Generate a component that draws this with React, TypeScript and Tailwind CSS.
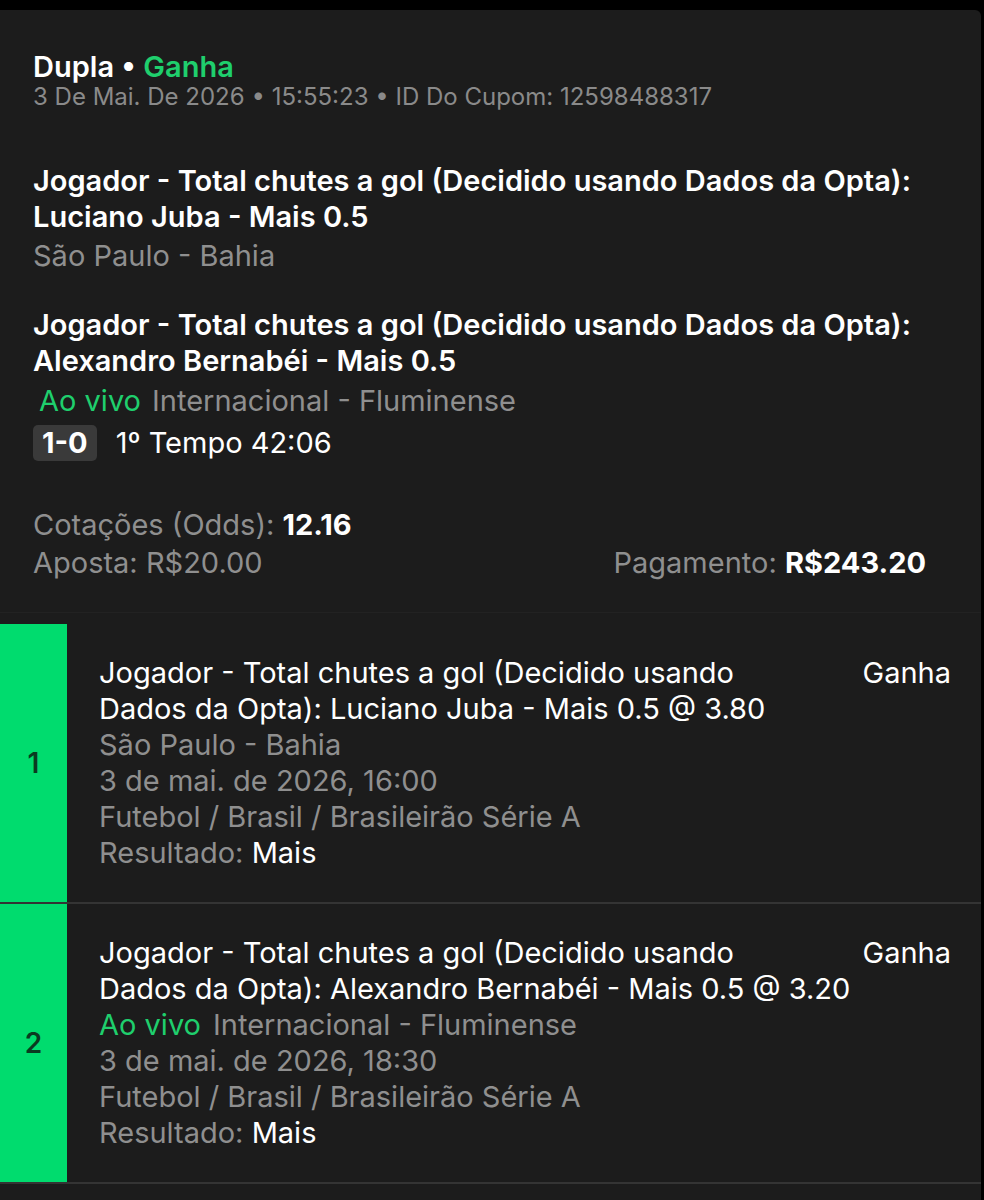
const font = { fontFamily: "Inter, 'Noto Sans', sans-serif" };

type Leg = {
  n: number;
  line1: string;
  line2: string;
  live: boolean;
  teams: string;
  date: string;
  path: string;
};

const legs: Leg[] = [
  {
    n: 1,
    line1: "Jogador - Total chutes a gol (Decidido usando",
    line2: "Dados da Opta): Luciano Juba - Mais 0.5 @ 3.80",
    live: false,
    teams: "São Paulo - Bahia",
    date: "3 de mai. de 2026, 16:00",
    path: "Futebol / Brasil / Brasileirão Série A",
  },
  {
    n: 2,
    line1: "Jogador - Total chutes a gol (Decidido usando",
    line2: "Dados da Opta): Alexandro Bernabéi - Mais 0.5 @ 3.20",
    live: true,
    teams: "Internacional - Fluminense",
    date: "3 de mai. de 2026, 18:30",
    path: "Futebol / Brasil / Brasileirão Série A",
  },
];

const LegRow = ({ leg }: { leg: Leg }) => (
  <div className="flex border-b-2 border-[#343434]">
    <div className="w-[67px] shrink-0 bg-[#00dc6e] flex items-center justify-center">
      <span className="text-[28px] font-semibold text-[#0b3a21]">{leg.n}</span>
    </div>
    <div className="flex-1 flex pl-[32px] pr-[30px] pt-[31px] pb-[31px] text-[29px] leading-[36px]">
      <div className="flex-1 whitespace-nowrap">
        <div className="text-white">{leg.line1}</div>
        <div className="text-white">{leg.line2}</div>
        <div className="text-[#8f8f8f]">
          {leg.live && <span className="text-[#1fcf6d] mr-[12px]">Ao vivo</span>}
          {leg.teams}
        </div>
        <div className="text-[#8f8f8f]">{leg.date}</div>
        <div className="text-[#8f8f8f]">{leg.path}</div>
        <div className="text-[#8f8f8f]">
          Resultado: <span className="text-white">Mais</span>
        </div>
      </div>
      <div className="w-[90px] shrink-0 text-white text-right">Ganha</div>
    </div>
  </div>
);

export default function App() {
  return (
    <div className="min-h-[1200px] bg-black pt-[10px] pr-[3px]" style={font}>
      <div className="bg-[#1c1c1c] rounded-tr-[6px]">
        <div className="pl-[33px] pr-[55px] pt-[40px] pb-[30px] border-b border-[#222]">
          <div className="text-[29px] leading-[34px] font-semibold text-white">
            Dupla • <span className="text-[#1fcf6d]">Ganha</span>
          </div>
          <div className="text-[24px] leading-[26px] text-[#8a8a8a]">
            3 De Mai. De 2026 • 15:55:23 • ID Do Cupom: 12598488317
          </div>

          <div className="mt-[53px] text-[29px] leading-[36px]">
            <div className="font-semibold text-white whitespace-nowrap">
              Jogador - Total chutes a gol (Decidido usando Dados da Opta):
              <br />
              Luciano Juba - Mais 0.5
            </div>
            <div className="text-[#8f8f8f] leading-[42px]">São Paulo - Bahia</div>
          </div>

          <div className="mt-[30px] text-[29px] leading-[36px]">
            <div className="font-semibold text-white whitespace-nowrap">
              Jogador - Total chutes a gol (Decidido usando Dados da Opta):
              <br />
              Alexandro Bernabéi - Mais 0.5
            </div>
            <div className="leading-[44px]">
              <span className="text-[#1fcf6d] ml-[6px] mr-[11px]">Ao vivo</span>
              <span className="text-[#8f8f8f]">Internacional - Fluminense</span>
            </div>
            <div className="flex items-center gap-[19px] h-[40px]">
              <span className="bg-[#3a3a3a] rounded-[5px] px-[9px] h-[36px] leading-[36px] font-bold text-white">
                1-0
              </span>
              <span className="text-white">1º Tempo 42:06</span>
            </div>
          </div>

          <div className="mt-[43px] text-[29px] leading-[38px] text-[#8f8f8f]">
            <div>
              Cotações (Odds): <span className="font-bold text-white">12.16</span>
            </div>
            <div className="flex justify-between">
              <span>Aposta: R$20.00</span>
              <span>
                Pagamento: <span className="font-bold text-white">R$243.20</span>
              </span>
            </div>
          </div>
        </div>

        <div className="mt-[11px]">
          {legs.map((l) => (
            <LegRow key={l.n} leg={l} />
          ))}
        </div>
        <div className="h-[20px]" />
      </div>
    </div>
  );
}
